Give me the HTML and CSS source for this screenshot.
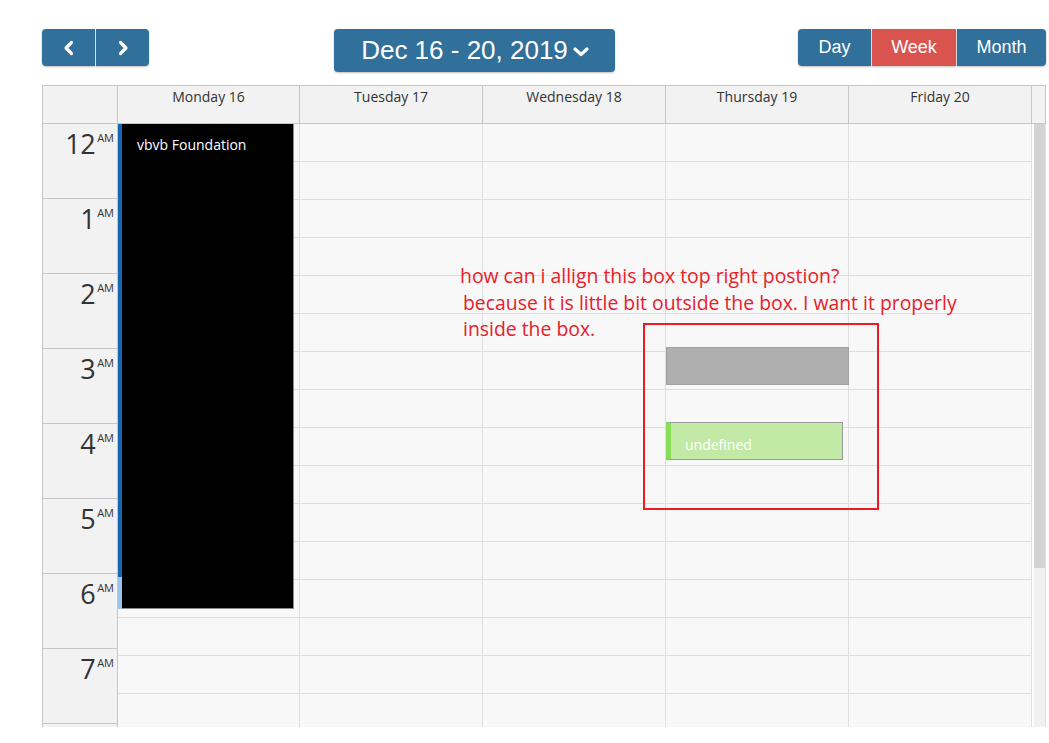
FILE: index.html
```html
<!DOCTYPE html>
<html lang="en">

<head>
    <meta charset="UTF-8">
    <title>Week schedule</title>
    <link rel="stylesheet" href="styles.css">
</head>

<body>
    <div class="page">
        <div class="toolbar">
            <div class="btn-group">
                <button class="btn btn-icon" aria-label="Previous week">
                    <svg width="12" height="16" viewBox="0 0 12 16"><polyline points="8.5,2.5 3,8 8.5,13.5" /></svg>
                </button>
                <button class="btn btn-icon" aria-label="Next week">
                    <svg width="12" height="16" viewBox="0 0 12 16"><polyline points="3.5,2.5 9,8 3.5,13.5" /></svg>
                </button>
            </div>

            <button class="btn btn-title">Dec 16 - 20, 2019
                <svg width="18" height="12" viewBox="0 0 18 12"><polyline points="3,3 9,8.5 15,3" /></svg>
            </button>

            <div class="btn-group views">
                <button class="btn btn-day">Day</button>
                <button class="btn btn-week active">Week</button>
                <button class="btn btn-month">Month</button>
            </div>
        </div>

        <div class="calendar">
            <div class="cal-head">
                <div class="corner"></div>
                <div class="day-name">Monday 16</div>
                <div class="day-name">Tuesday 17</div>
                <div class="day-name">Wednesday 18</div>
                <div class="day-name">Thursday 19</div>
                <div class="day-name">Friday 20</div>
                <div class="head-gap"></div>
            </div>

            <div class="cal-body">
                <div class="gutter">
                    <div class="hour"><span class="num">12</span><span class="ampm">AM</span></div>
                    <div class="hour"><span class="num">1</span><span class="ampm">AM</span></div>
                    <div class="hour"><span class="num">2</span><span class="ampm">AM</span></div>
                    <div class="hour"><span class="num">3</span><span class="ampm">AM</span></div>
                    <div class="hour"><span class="num">4</span><span class="ampm">AM</span></div>
                    <div class="hour"><span class="num">5</span><span class="ampm">AM</span></div>
                    <div class="hour"><span class="num">6</span><span class="ampm">AM</span></div>
                    <div class="hour"><span class="num">7</span><span class="ampm">AM</span></div>
                </div>

                <div class="day">
                    <div class="slots"></div>
                    <div class="event event-dark">
                        <span class="event-title">vbvb Foundation</span>
                    </div>
                </div>
                <div class="day"><div class="slots"></div></div>
                <div class="day"><div class="slots"></div></div>
                <div class="day">
                    <div class="slots"></div>
                    <div class="event event-blocked"></div>
                    <div class="event event-green">
                        <span class="event-title">undefined</span>
                    </div>
                </div>
                <div class="day"><div class="slots"></div></div>

                <div class="scrollbar"><div class="thumb"></div></div>
            </div>
        </div>

        <p class="note">
            <span>how can i allign this box top right postion?</span>
            <span class="indent">because it is little bit outside the box. I want it properly</span>
            <span class="indent">inside the box.</span>
        </p>
        <div class="note-box"></div>
    </div>

    <script>
        // fill every day column with half-hour slots
        var cols = document.querySelectorAll('.slots');
        for (var i = 0; i < cols.length; i++) {
            var html = '';
            for (var s = 0; s < 16; s++) {
                html += '<div class="slot"></div>';
            }
            cols[i].innerHTML = html;
        }
    </script>
</body>

</html>
```

FILE: styles.css
```css
* {
    margin: 0;
    padding: 0;
    box-sizing: border-box;
}
body {
    background: #fff;
    font-family: "Open Sans", "Liberation Sans", sans-serif;
    color: #333;
}
.page {
    position: relative;
    width: 1049px;
    height: 743px;
    padding: 29px 0 0 42px;
    overflow: hidden;
}

/* toolbar */
.toolbar {
    display: flex;
    align-items: flex-start;
    width: 1004px;
    height: 43px;
}
.btn-group {
    display: flex;
    gap: 1px;
}
.btn {
    border: 0;
    background: #30709a;
    color: #fff;
    font-family: "Liberation Sans", Arial, sans-serif;
    cursor: pointer;
    box-shadow: 0 1px 2px rgba(0, 0, 0, 0.25);
}
.btn svg {
    fill: none;
    stroke: #fff;
    stroke-width: 3.2;
    stroke-linecap: round;
    stroke-linejoin: round;
}
.btn-icon {
    width: 53px;
    height: 37px;
    display: flex;
    align-items: center;
    justify-content: center;
}
.btn-group .btn:first-child {
    border-radius: 4px 0 0 4px;
}
.btn-group .btn:last-child {
    border-radius: 0 4px 4px 0;
}
.btn-title {
    margin-left: 185px;
    width: 281px;
    height: 43px;
    border-radius: 4px;
    font-size: 26px;
    display: flex;
    align-items: center;
    justify-content: center;
    gap: 4px;
    padding-left: 2px;
}
.btn-title svg {
    margin-top: 2px;
}
.views {
    margin-left: auto;
}
.views .btn {
    height: 37px;
    font-size: 18px;
}
.btn-day {
    width: 73px;
}
.btn-week {
    width: 84px;
}
.btn-month {
    width: 89px;
}
.views .active {
    background: #d9534f;
}

/* calendar grid */
.calendar {
    margin-top: 13px;
    width: 1004px;
    border-left: 1px solid #c6c6c6;
}
.cal-head,
.cal-body {
    display: grid;
    grid-template-columns: 75px 182px 183px 183px 183px 183px 14px;
}
.cal-head {
    height: 39px;
    border-top: 1px solid #c6c6c6;
    border-bottom: 1px solid #c6c6c6;
    background: #f2f2f2;
}
.cal-head > div {
    border-right: 1px solid #c6c6c6;
}
.day-name {
    text-align: center;
    font-size: 14px;
    padding-top: 1px;
}
.cal-body {
    height: 603px;
    overflow: hidden;
}
.gutter {
    background: #f2f2f2;
    border-right: 1px solid #c6c6c6;
}
.hour {
    height: 75px;
    border-bottom: 1px solid #c6c6c6;
    display: flex;
    justify-content: flex-end;
    padding: 4px 3px 0 0;
}
.hour .num {
    font-size: 27px;
    line-height: 32px;
    letter-spacing: -0.5px;
}
.hour .ampm {
    font-size: 11px;
    line-height: 14px;
    margin: 3px 0 0 2px;
}
.day {
    position: relative;
    background: #f8f8f8;
    border-right: 1px solid #dedede;
}
.slot {
    height: 38px;
    border-bottom: 1px solid #dedede;
}

/* events */
.event {
    position: absolute;
    left: 0;
}
.event-title {
    display: block;
    font-size: 14px;
    color: #fff;
}
.event-dark {
    top: 0;
    width: 176px;
    height: 485px;
    background: #000;
    border: 1px solid #8a8a8a;
    border-width: 0 1px 1px 0;
    box-shadow: inset 4px 0 0 #1565b0;
}
.event-dark::after {
    content: "";
    position: absolute;
    left: 0;
    bottom: -1px;
    width: 4px;
    height: 32px;
    background: #9cc4e8;
}
.event-dark .event-title {
    padding: 11px 0 0 19px;
}
.event-blocked {
    top: 223px;
    width: 183px;
    height: 38px;
    background: #afafaf;
    border: 1px solid #a2a2a2;
}
.event-green {
    top: 298px;
    width: 177px;
    height: 38px;
    background: #c2eaa6;
    border: 1px solid #999;
    border-left: 5px solid #88dc58;
}
.event-green .event-title {
    padding: 12px 0 0 14px;
}

/* scrollbar */
.scrollbar {
    background: #f1f1f1;
    border-left: 2px solid #fff;
    border-right: 1px solid #e2e2e2;
}
.thumb {
    height: 444px;
    background: #d3d3d3;
}

/* red remark drawn over the grid */
.note {
    position: absolute;
    left: 460px;
    top: 263px;
    font-size: 19.4px;
    line-height: 26.5px;
    color: #e8202a;
}
.note span {
    display: block;
    white-space: nowrap;
}
.note .indent {
    padding-left: 3px;
}
.note-box {
    position: absolute;
    left: 643px;
    top: 323px;
    width: 236px;
    height: 187px;
    border: 2px solid #ed1c24;
}
```
